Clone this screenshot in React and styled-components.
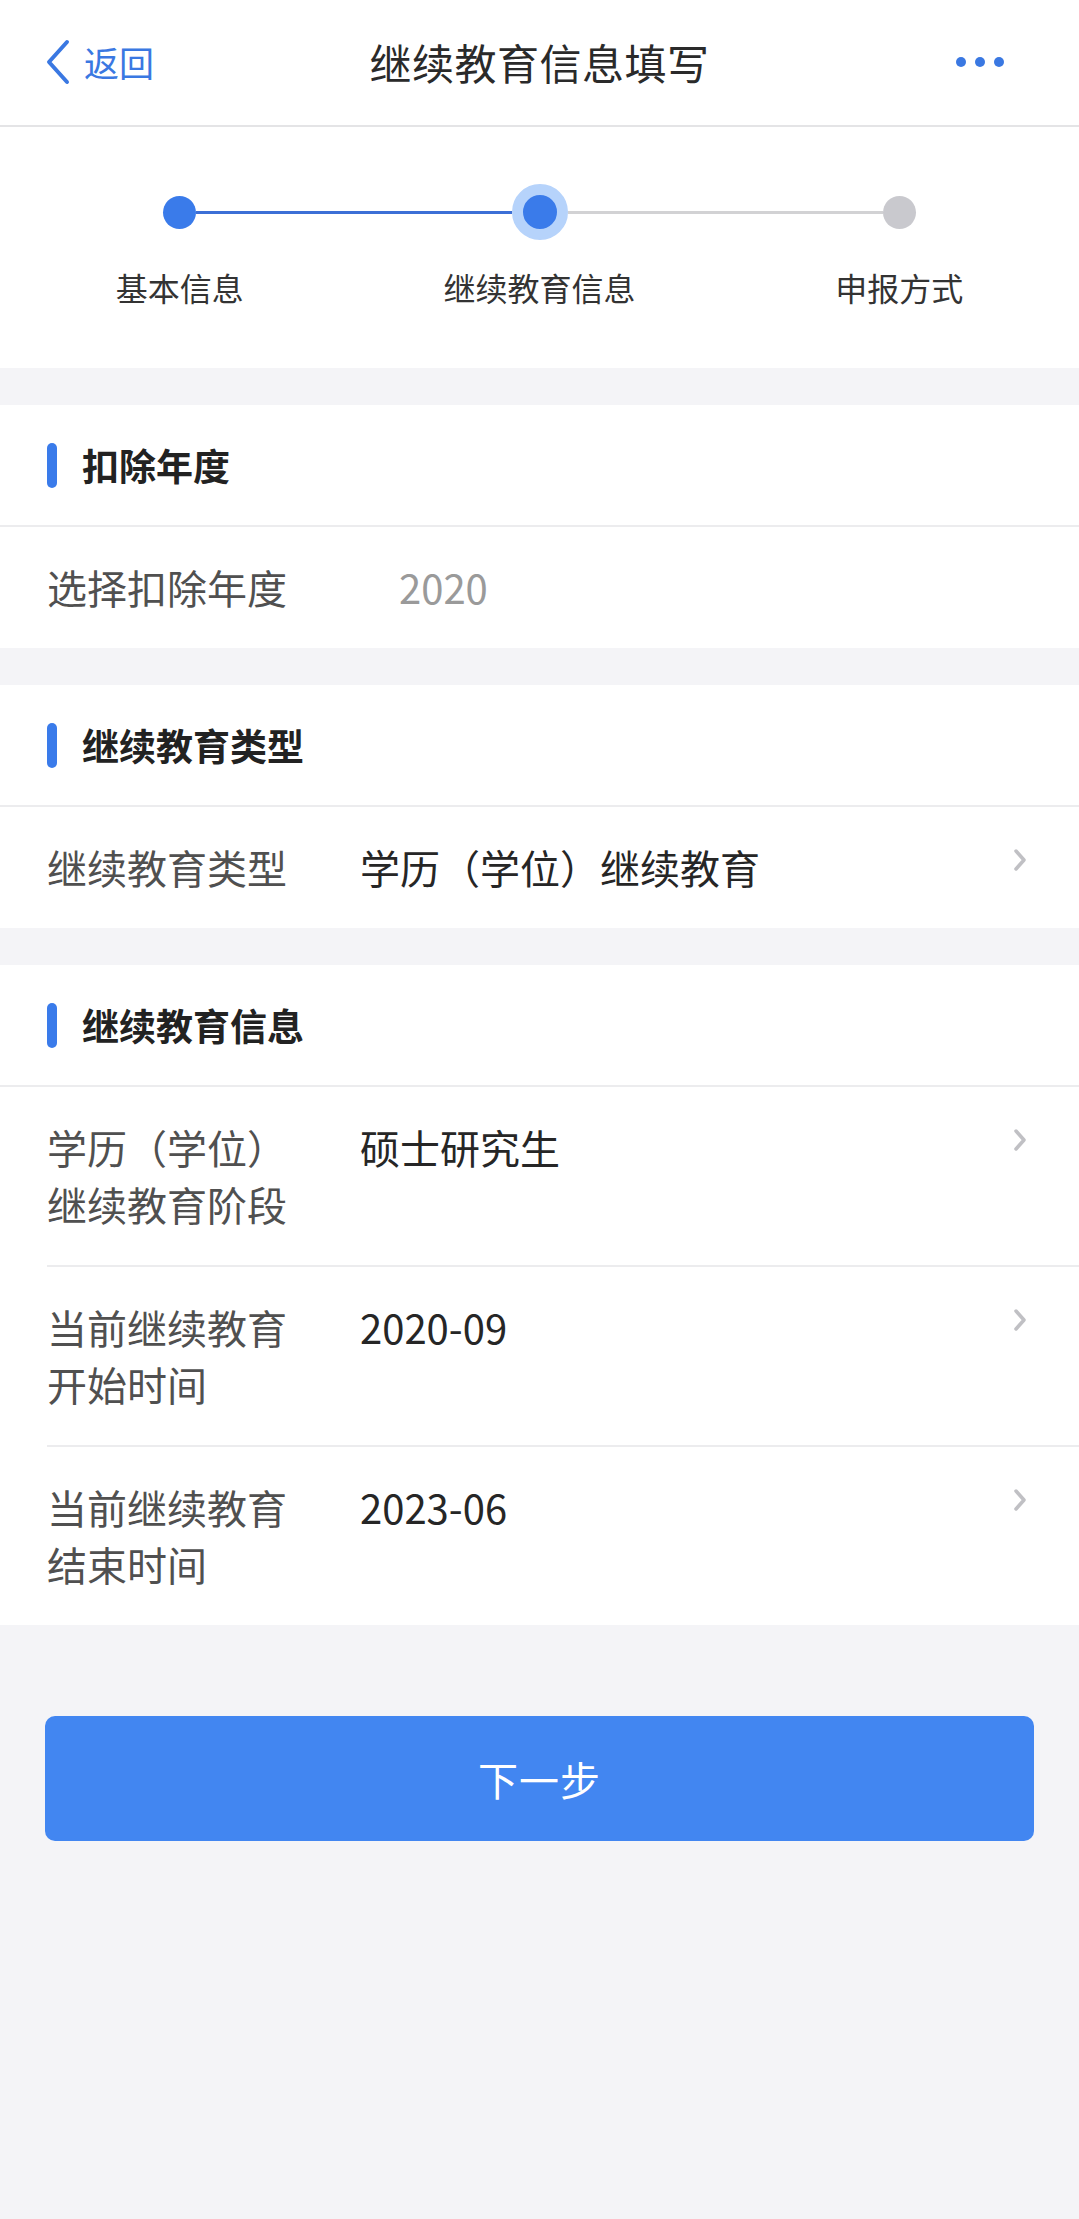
import React from "react";
import styled, { createGlobalStyle } from "styled-components";

const GlobalStyle = createGlobalStyle`
  html, body {
    margin: 0;
    padding: 0;
    background: #f4f4f7;
  }
  body {
    font-family: "Noto Sans CJK SC", "Noto Sans", sans-serif;
    color: #222;
  }
  * {
    box-sizing: border-box;
  }
`;

const Page = styled.div`
  width: 1079px;
  min-height: 2219px;
  background: #f4f4f7;
`;

const Header = styled.header`
  display: grid;
  grid-template-columns: 1fr auto 1fr;
  align-items: center;
  height: 127px;
  padding-bottom: 2px;
  background: #fff;
  border-bottom: 2px solid #e4e4e6;
`;

const Back = styled.div`
  display: flex;
  align-items: center;
  gap: 13px;
  padding-left: 45px;
  color: #3a78e2;
  font-size: 35px;
  line-height: 1;
`;

const Title = styled.h1`
  margin: 0;
  font-size: 42px;
  font-weight: 400;
  color: #2a2a2a;
  letter-spacing: 0.5px;
`;

const More = styled.div`
  display: flex;
  justify-content: flex-end;
  gap: 9px;
  padding-right: 75px;
  span {
    width: 10px;
    height: 10px;
    border-radius: 50%;
    background: #3a78e2;
  }
`;

const Steps = styled.div`
  display: grid;
  grid-template-columns: repeat(3, 1fr);
  padding: 57px 0 61px;
  background: #fff;
`;

const Step = styled.div`
  display: flex;
  flex-direction: column;
  align-items: center;
`;

const Track = styled.div`
  display: flex;
  align-items: center;
  width: 100%;
  height: 56px;
`;

const Segment = styled.div`
  flex: 1;
  height: 3px;
  background: ${(p) => p.$color || "transparent"};
`;

const Dot = styled.div`
  flex: none;
  border-radius: 50%;
  width: ${(p) => (p.$active ? "56px" : "33px")};
  height: ${(p) => (p.$active ? "56px" : "33px")};
  background: ${(p) => (p.$pending ? "#c9c9ce" : "#3a7bea")};
  border: ${(p) => (p.$active ? "11.5px solid #b6d3fb" : "none")};
`;

const StepLabel = styled.div`
  margin-top: 27px;
  font-size: 32px;
  line-height: 40px;
  color: #333;
`;

const Card = styled.section`
  margin-top: 37px;
  background: #fff;
`;

const CardTitle = styled.div`
  display: flex;
  align-items: center;
  gap: 25px;
  height: 122px;
  padding-left: 47px;
  border-bottom: 2px solid #ececee;
  font-size: 37px;
  font-weight: 700;
  color: #222;

  &::before {
    content: "";
    width: 10px;
    height: 45px;
    border-radius: 5px;
    background: #3a7bea;
  }
`;

const Row = styled.div`
  display: flex;
  align-items: flex-start;
  padding: 32px 52px 32px 0;
  margin-left: ${(p) => (p.$inset ? "47px" : "0")};
  padding-left: ${(p) => (p.$inset ? "0" : "47px")};
  border-top: ${(p) => (p.$divider ? "2px solid #ececee" : "none")};
  font-size: 40px;
  line-height: 57px;
`;

const Label = styled.div`
  flex: none;
  width: 240px;
  margin-right: 73px;
  color: #505050;
`;

const Value = styled.div`
  flex: 1;
  color: ${(p) => (p.$muted ? "#9a9a9a" : "#262626")};
  padding-left: ${(p) => (p.$muted ? "39px" : "0")};
`;

const Arrow = styled.svg`
  flex: none;
  margin-top: 9px;
  width: 14px;
  height: 24px;
`;

const Footer = styled.div`
  padding: 91px 45px 0;
`;

const NextButton = styled.button`
  display: block;
  width: 100%;
  height: 125px;
  border: none;
  border-radius: 10px;
  background: #4286f1;
  color: #fff;
  font-family: inherit;
  font-size: 40px;
  letter-spacing: 1px;
`;

const Chevron = () => (
  <Arrow viewBox="0 0 14 24">
    <polyline
      points="3,3 11,12 3,21"
      fill="none"
      stroke="#c0c0c4"
      strokeWidth="3.5"
      strokeLinecap="round"
      strokeLinejoin="round"
    />
  </Arrow>
);

const steps = [
  { label: "基本信息", left: null, right: "#3c6fd6" },
  { label: "继续教育信息", left: "#3c6fd6", right: "#d2d2d4", active: true },
  { label: "申报方式", left: "#d2d2d4", right: null, pending: true },
];

const infoRows = [
  { label: "学历（学位）继续教育阶段", value: "硕士研究生" },
  { label: "当前继续教育开始时间", value: "2020-09" },
  { label: "当前继续教育结束时间", value: "2023-06" },
];

const App = () => {
  return (
    <Page>
      <GlobalStyle />
      <Header>
        <Back>
          <svg width="26" height="46" viewBox="0 0 26 46">
            <polyline
              points="22,3 4,23 22,43"
              fill="none"
              stroke="#3a78e2"
              strokeWidth="4"
              strokeLinecap="round"
              strokeLinejoin="round"
            />
          </svg>
          返回
        </Back>
        <Title>继续教育信息填写</Title>
        <More>
          <span />
          <span />
          <span />
        </More>
      </Header>

      <Steps>
        {steps.map((s) => (
          <Step key={s.label}>
            <Track>
              <Segment $color={s.left} />
              <Dot $active={s.active} $pending={s.pending} />
              <Segment $color={s.right} />
            </Track>
            <StepLabel>{s.label}</StepLabel>
          </Step>
        ))}
      </Steps>

      <Card>
        <CardTitle>扣除年度</CardTitle>
        <Row>
          <Label>选择扣除年度</Label>
          <Value $muted>2020</Value>
        </Row>
      </Card>

      <Card>
        <CardTitle>继续教育类型</CardTitle>
        <Row>
          <Label>继续教育类型</Label>
          <Value>学历（学位）继续教育</Value>
          <Chevron />
        </Row>
      </Card>

      <Card>
        <CardTitle>继续教育信息</CardTitle>
        {infoRows.map((r, i) => (
          <Row key={r.label} $inset $divider={i > 0}>
            <Label>{r.label}</Label>
            <Value>{r.value}</Value>
            <Chevron />
          </Row>
        ))}
      </Card>

      <Footer>
        <NextButton>下一步</NextButton>
      </Footer>
    </Page>
  );
};

export default App;
